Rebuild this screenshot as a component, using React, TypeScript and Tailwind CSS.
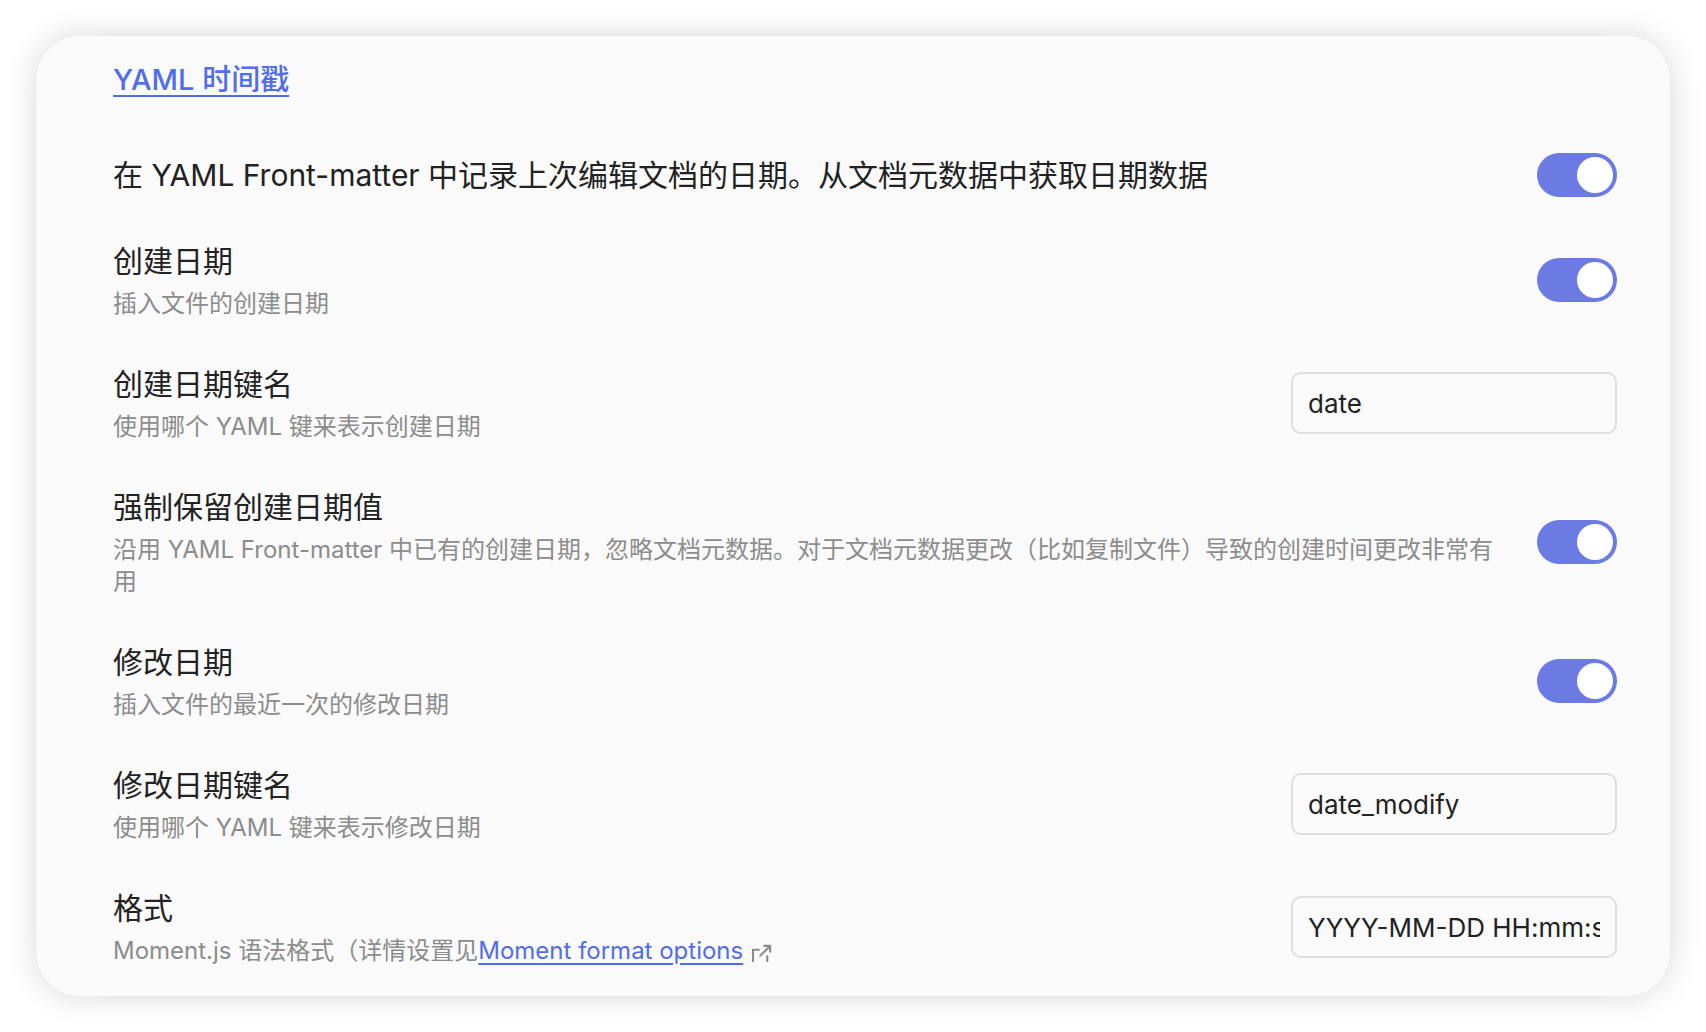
import React from 'react';

const FONT = { fontFamily: '"Inter", "Noto Sans CJK SC", sans-serif' };

const Toggle: React.FC = () => (
  <div className="shrink-0 w-[80px] h-[44px] rounded-full bg-[#6b7be3] flex items-center justify-end pr-[4px]">
    <div className="w-[36px] h-[36px] rounded-full bg-white" />
  </div>
);

const TextBox: React.FC<{ value: string }> = ({ value }) => (
  <input
    readOnly
    value={value}
    className="shrink-0 w-[326px] h-[62px] rounded-[10px] border-2 border-[#dedede] bg-[#fafafa] px-[15px] text-[26px] text-[#222222] outline-none"
    style={FONT}
  />
);

const ExternalIcon: React.FC = () => (
  <svg
    width="23"
    height="19"
    viewBox="0 0 24 20"
    fill="none"
    stroke="#8c8c8c"
    strokeWidth="2.2"
    className="inline-block ml-[8px] align-[-4px]"
  >
    <path d="M2 19V6h7" />
    <path d="M17 12v7" />
    <path d="M9 13 20 2" />
    <path d="M13 2h7v7" />
  </svg>
);

type Row = {
  name: string;
  desc?: React.ReactNode;
  control: React.ReactNode;
};

const SettingRow: React.FC<Row> = ({ name, desc, control }) => (
  <div className="flex items-center pt-[22px] pb-[21px]">
    <div className="flex-1 min-w-0 mr-[24px]">
      <div className="text-[30px] leading-[42px] text-[#222222]">{name}</div>
      {desc && <div className="mt-[6px] text-[24px] leading-[32px] text-[#8c8c8c]">{desc}</div>}
    </div>
    {control}
  </div>
);

const App: React.FC = () => {
  const rows: Row[] = [
    {
      name: '在 YAML Front-matter 中记录上次编辑文档的日期。从文档元数据中获取日期数据',
      control: <Toggle />,
    },
    { name: '创建日期', desc: '插入文件的创建日期', control: <Toggle /> },
    { name: '创建日期键名', desc: '使用哪个 YAML 键来表示创建日期', control: <TextBox value="date" /> },
    {
      name: '强制保留创建日期值',
      desc: (
        <>
          <span className="whitespace-nowrap">
            沿用 YAML Front-matter 中已有的创建日期，忽略文档元数据。对于文档元数据更改（比如复制文件）导致的创建时间更改非常有
          </span>
          <br />用
        </>
      ),
      control: <Toggle />,
    },
    { name: '修改日期', desc: '插入文件的最近一次的修改日期', control: <Toggle /> },
    { name: '修改日期键名', desc: '使用哪个 YAML 键来表示修改日期', control: <TextBox value="date_modify" /> },
    {
      name: '格式',
      desc: (
        <>
          Moment.js 语法格式（详情设置见
          <a className="text-[#506ded] underline underline-offset-[4px] decoration-[2px]">Moment format options</a>
          <ExternalIcon />
        </>
      ),
      control: <TextBox value="YYYY-MM-DD HH:mm:ss" />,
    },
  ];

  return (
    <div className="w-[1706px] h-[1032px] bg-white overflow-hidden pt-[36px] pl-[36px]" style={FONT}>
      <div className="w-[1634px] h-[960px] rounded-[44px] bg-[#fafafa] shadow-[0_0_32px_rgba(0,0,0,0.16)] pt-[23px] pl-[77px] pr-[53px] overflow-hidden">
        <div className="mb-[30px]">
          <a className="text-[29px] leading-[42px] font-medium text-[#506ded] underline underline-offset-[5px] decoration-[2px]">
            YAML 时间戳
          </a>
        </div>
        {rows.map((r) => (
          <SettingRow key={r.name} {...r} />
        ))}
      </div>
    </div>
  );
};

export default App;
